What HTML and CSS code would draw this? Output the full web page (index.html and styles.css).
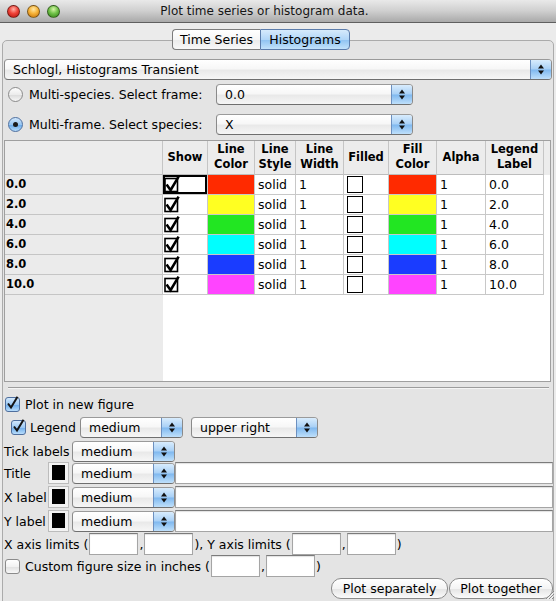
FILE: index.html
```html
<!DOCTYPE html>
<html>
<head>
<meta charset="utf-8">
<title>Plot time series or histogram data.</title>
<link rel="stylesheet" href="styles.css">
</head>
<body>
<div class="titlebar">
  <div class="lights"><span class="light red"></span><span class="light yellow"></span><span class="light green"></span></div>
  <div class="title">Plot time series or histogram data.</div>
</div>
<div class="window">
  <div class="tabs"><span class="tab">Time Series</span><span class="tab active">Histograms</span></div>
  <div class="pane">
    <div class="popup popup-full"><span class="popup-text">Schlogl, Histograms Transient</span><span class="popup-btn"><svg width="6" height="11" viewBox="0 0 6 11"><path d="M0 4.5L3 0.5L6 4.5Z M0 6.5L6 6.5L3 10.5Z" fill="#111"/></svg></span></div>

    <div class="radio-row r1"><span class="radio"></span><span class="radio-label">Multi-species. Select frame:</span><div class="popup popup-mid"><span class="popup-text">0.0</span><span class="popup-btn"><svg width="6" height="11" viewBox="0 0 6 11"><path d="M0 4.5L3 0.5L6 4.5Z M0 6.5L6 6.5L3 10.5Z" fill="#111"/></svg></span></div></div>
    <div class="radio-row r2"><span class="radio on"><span class="dot"></span></span><span class="radio-label">Multi-frame. Select species:</span><div class="popup popup-mid"><span class="popup-text">X</span><span class="popup-btn"><svg width="6" height="11" viewBox="0 0 6 11"><path d="M0 4.5L3 0.5L6 4.5Z M0 6.5L6 6.5L3 10.5Z" fill="#111"/></svg></span></div></div>

    <div class="table-scroll">
      <div class="grid">
        <div class="hd corner"></div>
        <div class="hd">Show</div>
        <div class="hd">Line<br>Color</div>
        <div class="hd">Line<br>Style</div>
        <div class="hd">Line<br>Width</div>
        <div class="hd">Filled</div>
        <div class="hd">Fill<br>Color</div>
        <div class="hd">Alpha</div>
        <div class="hd">Legend<br>Label</div>

        <div class="rh">0.0</div>
        <div class="c chk focus"><svg width="16" height="19" viewBox="0 0 16 19"><rect x="1" y="3.5" width="12.5" height="13" fill="#fff" stroke="#000" stroke-width="1.6"/><path d="M2.6 9.6L6.6 15.2L14.6 1.6" fill="none" stroke="#000" stroke-width="2.6"/></svg></div>
        <div class="c col" style="background:#ff2a00"></div>
        <div class="c txt">solid</div>
        <div class="c txt">1</div>
        <div class="c box"><span class="emptybox"></span></div>
        <div class="c col" style="background:#ff2a00"></div>
        <div class="c txt">1</div>
        <div class="c txt">0.0</div>

        <div class="rh">2.0</div>
        <div class="c chk"><svg width="16" height="19" viewBox="0 0 16 19"><rect x="1" y="3.5" width="12.5" height="13" fill="#fff" stroke="#000" stroke-width="1.6"/><path d="M2.6 9.6L6.6 15.2L14.6 1.6" fill="none" stroke="#000" stroke-width="2.6"/></svg></div>
        <div class="c col" style="background:#ffff22"></div>
        <div class="c txt">solid</div>
        <div class="c txt">1</div>
        <div class="c box"><span class="emptybox"></span></div>
        <div class="c col" style="background:#ffff22"></div>
        <div class="c txt">1</div>
        <div class="c txt">2.0</div>

        <div class="rh">4.0</div>
        <div class="c chk"><svg width="16" height="19" viewBox="0 0 16 19"><rect x="1" y="3.5" width="12.5" height="13" fill="#fff" stroke="#000" stroke-width="1.6"/><path d="M2.6 9.6L6.6 15.2L14.6 1.6" fill="none" stroke="#000" stroke-width="2.6"/></svg></div>
        <div class="c col" style="background:#22e622"></div>
        <div class="c txt">solid</div>
        <div class="c txt">1</div>
        <div class="c box"><span class="emptybox"></span></div>
        <div class="c col" style="background:#22e622"></div>
        <div class="c txt">1</div>
        <div class="c txt">4.0</div>

        <div class="rh">6.0</div>
        <div class="c chk"><svg width="16" height="19" viewBox="0 0 16 19"><rect x="1" y="3.5" width="12.5" height="13" fill="#fff" stroke="#000" stroke-width="1.6"/><path d="M2.6 9.6L6.6 15.2L14.6 1.6" fill="none" stroke="#000" stroke-width="2.6"/></svg></div>
        <div class="c col" style="background:#00ffff"></div>
        <div class="c txt">solid</div>
        <div class="c txt">1</div>
        <div class="c box"><span class="emptybox"></span></div>
        <div class="c col" style="background:#00ffff"></div>
        <div class="c txt">1</div>
        <div class="c txt">6.0</div>

        <div class="rh">8.0</div>
        <div class="c chk"><svg width="16" height="19" viewBox="0 0 16 19"><rect x="1" y="3.5" width="12.5" height="13" fill="#fff" stroke="#000" stroke-width="1.6"/><path d="M2.6 9.6L6.6 15.2L14.6 1.6" fill="none" stroke="#000" stroke-width="2.6"/></svg></div>
        <div class="c col" style="background:#1a3cff"></div>
        <div class="c txt">solid</div>
        <div class="c txt">1</div>
        <div class="c box"><span class="emptybox"></span></div>
        <div class="c col" style="background:#1a3cff"></div>
        <div class="c txt">1</div>
        <div class="c txt">8.0</div>

        <div class="rh">10.0</div>
        <div class="c chk"><svg width="16" height="19" viewBox="0 0 16 19"><rect x="1" y="3.5" width="12.5" height="13" fill="#fff" stroke="#000" stroke-width="1.6"/><path d="M2.6 9.6L6.6 15.2L14.6 1.6" fill="none" stroke="#000" stroke-width="2.6"/></svg></div>
        <div class="c col" style="background:#ff44ff"></div>
        <div class="c txt">solid</div>
        <div class="c txt">1</div>
        <div class="c box"><span class="emptybox"></span></div>
        <div class="c col" style="background:#ff44ff"></div>
        <div class="c txt">1</div>
        <div class="c txt">10.0</div>
      </div>
    </div>

    <div class="sep"></div>

    <div class="row-plotnew">
      <span class="cb on"><svg width="15" height="15" viewBox="0 0 15 15"><path d="M3 7.5L6 11.5L12.5 0.8" fill="none" stroke="#151515" stroke-width="2"/></svg></span>
      <span>Plot in new figure</span>
    </div>

    <div class="row-legend">
      <span class="cb on"><svg width="15" height="15" viewBox="0 0 15 15"><path d="M3 7.5L6 11.5L12.5 0.8" fill="none" stroke="#151515" stroke-width="2"/></svg></span>
      <span class="legend-label">Legend</span>
      <div class="popup popup-legend"><span class="popup-text">medium</span><span class="popup-btn"><svg width="6" height="11" viewBox="0 0 6 11"><path d="M0 4.5L3 0.5L6 4.5Z M0 6.5L6 6.5L3 10.5Z" fill="#111"/></svg></span></div>
      <div class="popup popup-loc"><span class="popup-text">upper right</span><span class="popup-btn"><svg width="6" height="11" viewBox="0 0 6 11"><path d="M0 4.5L3 0.5L6 4.5Z M0 6.5L6 6.5L3 10.5Z" fill="#111"/></svg></span></div>
    </div>

    <div class="row-tick">
      <span class="tick-label">Tick labels</span>
      <div class="popup popup-size"><span class="popup-text">medium</span><span class="popup-btn"><svg width="6" height="11" viewBox="0 0 6 11"><path d="M0 4.5L3 0.5L6 4.5Z M0 6.5L6 6.5L3 10.5Z" fill="#111"/></svg></span></div>
    </div>

    <div class="row-label first">
      <span class="lbl">Title</span>
      <span class="swatch"><span class="swatch-in"></span></span>
      <div class="popup popup-size"><span class="popup-text">medium</span><span class="popup-btn"><svg width="6" height="11" viewBox="0 0 6 11"><path d="M0 4.5L3 0.5L6 4.5Z M0 6.5L6 6.5L3 10.5Z" fill="#111"/></svg></span></div>
      <span class="field grow"></span>
    </div>
    <div class="row-label">
      <span class="lbl">X label</span>
      <span class="swatch"><span class="swatch-in"></span></span>
      <div class="popup popup-size"><span class="popup-text">medium</span><span class="popup-btn"><svg width="6" height="11" viewBox="0 0 6 11"><path d="M0 4.5L3 0.5L6 4.5Z M0 6.5L6 6.5L3 10.5Z" fill="#111"/></svg></span></div>
      <span class="field grow"></span>
    </div>
    <div class="row-label">
      <span class="lbl">Y label</span>
      <span class="swatch"><span class="swatch-in"></span></span>
      <div class="popup popup-size"><span class="popup-text">medium</span><span class="popup-btn"><svg width="6" height="11" viewBox="0 0 6 11"><path d="M0 4.5L3 0.5L6 4.5Z M0 6.5L6 6.5L3 10.5Z" fill="#111"/></svg></span></div>
      <span class="field grow"></span>
    </div>

    <div class="row-limits">
      <span>X axis limits (</span><span class="field small"></span><span>,</span><span class="field small"></span><span>), Y axis limits (</span><span class="field small"></span><span>,</span><span class="field small"></span><span>)</span>
    </div>

    <div class="row-custom">
      <span class="cb"></span>
      <span>Custom figure size in inches (</span><span class="field small"></span><span>,</span><span class="field small"></span><span>)</span>
    </div>

    <div class="row-buttons">
      <span class="btn btn-sep">Plot separately</span><span class="btn btn-tog">Plot together</span>
    </div>
  </div>
</div>
<svg class="grip" width="12" height="12" viewBox="0 0 12 12"><path d="M11 3L3 11M11 6L6 11M11 9L9 11" stroke="#8a8a8a" stroke-width="1"/><path d="M11.5 4L4 11.5M11.5 7L7 11.5" stroke="#fff" stroke-width="0.8"/></svg>
</body>
</html>
```

FILE: styles.css
```css
* { box-sizing: border-box; }
html, body { margin: 0; padding: 0; }
body {
  width: 556px;
  height: 601px;
  overflow: hidden;
  background: #ebebeb;
  font-family: "DejaVu Sans", "Noto Sans", sans-serif;
  font-size: 12.5px;
  color: #000;
  position: relative;
}

/* Title bar */
.titlebar {
  height: 23px;
  background: linear-gradient(#e9e9e9, #cfcfcf 50%, #a9a9a9);
  border-bottom: 1px solid #5f5f5f;
  display: flex;
  align-items: center;
  position: relative;
}
.lights { display: flex; gap: 7px; padding-left: 7px; width: 0; flex: 0 0 0; white-space: nowrap; }
.light {
  width: 13px; height: 13px; border-radius: 50%;
  display: inline-block; flex: 0 0 13px;
  border: 1px solid rgba(0,0,0,0.45);
}
.light.red { background: radial-gradient(circle at 50% 30%, #ffb2a8 0, #f0443a 45%, #b0100a 100%); }
.light.yellow { background: radial-gradient(circle at 50% 30%, #ffe8a6 0, #f7b43a 45%, #c06d05 100%); }
.light.green { background: radial-gradient(circle at 50% 30%, #d7f5a8 0, #72c34a 45%, #2f7d12 100%); }
.title {
  flex: 1;
  text-align: center;
  padding-right: 34px;
  color: #151515;
  font-size: 12px;
  line-height: 22px;
}

/* Window & tabs */
.window { padding-top: 6px; }
.tabs {
  display: flex;
  justify-content: center;
  padding-right: 34px;
  position: relative;
  z-index: 1;
}
.tab {
  height: 21px;
  line-height: 19px;
  border: 1px solid #7c7c7c;
  background: linear-gradient(#ffffff, #f6f6f6 50%, #ebebeb 51%, #f8f8f8);
  width: 88px;
  text-align: center;
  white-space: nowrap;
}
.tab:first-child { border-radius: 4px 0 0 4px; border-right: 0; }
.tab.active {
  width: 90px;
  border-radius: 0 4px 4px 0;
  border-color: #5b7cab;
  background: linear-gradient(#d6eafc, #b1d6f8 50%, #8ec2f1 51%, #c2e2fb);
}

.pane {
  margin: -10px 2px 0 2px;
  border: 1px solid #ababab;
  border-radius: 5px 5px 0 0;
  background: #e4e4e4;
  padding: 18px 0 0 1px;
  height: 572px;
}

/* Popup (Aqua) */
.popup {
  display: flex;
  height: 21px;
  border: 1px solid #8a8a8a;
  border-top-color: #9a9a9a;
  border-bottom-color: #6f6f6f;
  border-radius: 4px;
  background: linear-gradient(#ffffff, #f7f7f7 45%, #e9e9e9 55%, #f6f6f6);
  overflow: hidden;
}
.popup-text {
  flex: 1;
  padding-left: 8px;
  line-height: 19px;
  white-space: nowrap;
}
.popup-btn {
  width: 21px;
  flex: 0 0 21px;
  display: flex;
  align-items: center;
  justify-content: center;
  background: linear-gradient(#d8ecfd, #a8d0f6 48%, #7fb8ef 52%, #bfe0fb);
  border-left: 1px solid #6c90c0;
}
.popup-full { width: 548px; }
.popup-mid { width: 197px; }
.popup-legend { width: 103px; }
.popup-loc { width: 127px; margin-left: 8px; }
.popup-size { width: 103px; }

/* Radio rows */
.radio-row { display: flex; align-items: center; height: 21px; }
.radio-row.r1 { margin-top: 4px; }
.radio-row.r2 { margin-top: 9px; }
.radio {
  width: 15px; height: 15px; border-radius: 50%;
  margin-left: 4px;
  border: 1px solid #8a8a8a;
  background: linear-gradient(#fdfdfd, #ececec 50%, #dcdcdc 55%, #f7f7f7);
  display: flex; align-items: center; justify-content: center;
}
.radio.on {
  border-color: #4e6f9f;
  background: linear-gradient(#d0e7fc, #97c6f3 50%, #6cadec 55%, #b5dbfb);
}
.dot { width: 5px; height: 5px; border-radius: 50%; background: #1b1b1b; }
.radio-label { width: 193px; padding-left: 6px; white-space: nowrap; }

/* Table */
.table-scroll {
  margin: 5px 2px 0 0;
  height: 242px;
  border: 1px solid #9f9f9f;
  background:
    linear-gradient(#ececec, #ececec) 0 0 / 100% 34px no-repeat,
    linear-gradient(to right, #ebebeb 158px, #ffffff 158px);
}
.grid {
  display: grid;
  grid-template-columns: 158px 45px 47px 41px 48px 45px 48px 49px 58px;
  grid-template-rows: 34px repeat(6, 20px);
  width: 539px;
}
.hd {
  border-right: 1px solid #c5c5c5;
  border-bottom: 1px solid #bdbdbd;
  font-weight: bold;
  font-size: 11.5px;
  line-height: 15px;
  text-align: center;
  display: flex;
  align-items: center;
  justify-content: center;
  padding-bottom: 1px;
}
.rh {
  border-right: 1px solid #c5c5c5;
  border-bottom: 1px solid #c5c5c5;
  font-weight: bold;
  font-size: 11.5px;
  line-height: 19px;
  padding-left: 1px;
}
.c {
  border-right: 1px solid #c8c8c8;
  border-bottom: 1px solid #c8c8c8;
  background: #fff;
}
.c.txt { padding-left: 3px; line-height: 19px; }
.c.chk { padding-left: 1px; display: flex; align-items: flex-start; }
.c.chk svg { display: block; }
.c.focus { box-shadow: inset 0 0 0 2px #000; }
.c.box { padding: 1px 0 0 3px; }
.emptybox { display: block; width: 16px; height: 17px; border: 1px solid #000; background: #fff; }

/* Separator */
.sep {
  margin: 5px 4px 0 4px;
  border-top: 1px solid #9c9c9c;
  border-bottom: 1px solid #f4f4f4;
}

/* Checkboxes */
.cb {
  width: 15px; height: 15px;
  border: 1px solid #8a8a8a;
  border-radius: 3px;
  background: linear-gradient(#ffffff, #f2f2f2 50%, #e2e2e2 55%, #f7f7f7);
  display: inline-flex;
  position: relative;
}
.cb.on {
  border-color: #4f6f9e;
  background: linear-gradient(#d2e8fc, #9cc9f4 50%, #72b0ed 55%, #b9ddfb);
}
.cb svg { position: absolute; left: -1px; top: -2px; }

.row-plotnew { display: flex; align-items: center; height: 16px; margin-top: 7px; padding-left: 1px; gap: 5px; }
.row-legend { display: flex; align-items: center; height: 21px; margin-top: 5px; padding-left: 7px; }
.legend-label { padding-left: 4px; width: 54px; }
.row-tick { display: flex; align-items: center; height: 21px; margin-top: 3px; }
.tick-label { width: 68px; white-space: nowrap; }
.row-label { display: flex; align-items: center; height: 22px; margin-top: 2px; }
.row-label.first { margin-top: 0; }
.lbl { width: 44px; white-space: nowrap; }
.swatch {
  width: 21px; height: 22px;
  border: 1px solid #bcbcbc;
  background: #f3f3f3;
  padding: 2px 3px 3px 3px;
  margin-right: 3px;
}
.swatch-in { display: block; width: 100%; height: 100%; background: #000; }
.field {
  display: inline-block;
  height: 22px;
  background: #fff;
  border: 1px solid #a5a5a5;
  border-top-color: #7b7b7b;
  box-shadow: inset 0 1px 1px rgba(0,0,0,0.12);
}
.field.grow { flex: 1; }
.field.small { width: 49px; }
.row-limits { display: flex; align-items: center; height: 22px; margin-top: 1px; gap: 1px; white-space: nowrap; }
.row-custom { display: flex; align-items: center; height: 22px; margin-top: 0; gap: 1px; padding-left: 1px; white-space: nowrap; }
.row-custom .cb { margin-right: 4px; }
.row-buttons { display: flex; justify-content: flex-end; margin-top: 1px; }
.btn {
  height: 21px;
  line-height: 19px;
  border: 1px solid #8a8a8a;
  border-radius: 10px;
  background: linear-gradient(#ffffff, #f4f4f4 50%, #e6e6e6 55%, #fbfbfb);
  text-align: center;
}
.btn-sep { width: 117px; }
.btn-tog { width: 104px; margin-left: 1px; }

.grip { position: absolute; right: 1px; bottom: 1px; }
```
